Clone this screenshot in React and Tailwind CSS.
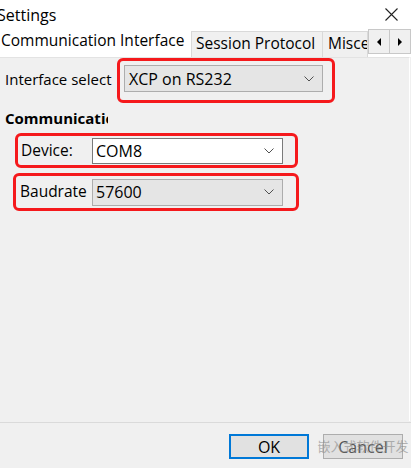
import React from "react";

function Chevron() {
  return (
    <svg width="10" height="6" viewBox="0 0 10 6" className="shrink-0">
      <path d="M0.5 0.5 L5 5 L9.5 0.5" fill="none" stroke="#505050" strokeWidth="1" />
    </svg>
  );
}

function Combo({ value, white, className = "" }) {
  return (
    <div
      className={`flex items-center justify-between border ${
        white ? "bg-white border-[#7a7a7a]" : "bg-[#e5e5e5] border-[#adadad]"
      } pl-[3px] pr-[8px] ${className}`}
    >
      <span className="text-[16px] leading-none text-black">{value}</span>
      <Chevron />
    </div>
  );
}

export default function App() {
  return (
    <div
      className="relative w-[411px] h-[468px] overflow-hidden bg-[#f0f0f0] text-black flex flex-col"
      style={{ fontFamily: '"Open Sans", "Noto Sans CJK SC", sans-serif' }}
    >
      {/* Title bar */}
      <div className="h-[29px] bg-white flex items-center justify-between shrink-0">
        <span className="ml-[-3px] text-[16px] leading-none">Settings</span>
        <svg width="13" height="13" viewBox="0 0 13 13" className="mr-[13px]">
          <path d="M0.5 0.5 L12.5 12.5 M12.5 0.5 L0.5 12.5" stroke="#222" strokeWidth="1.1" />
        </svg>
      </div>

      {/* Tab strip */}
      <div className="h-[28px] bg-white flex items-end shrink-0 relative">
        <div className="h-[28px] w-[191px] bg-white flex items-center pl-[1px] pb-[4px] shrink-0 z-10">
          <span className="text-[15.5px] leading-none whitespace-nowrap">Communication Interface</span>
        </div>
        <div className="h-[26px] w-[132px] bg-[#f0f0f0] border border-b-0 border-[#d9d9d9] flex items-center pl-[4px] pb-[2px] shrink-0">
          <span className="text-[15.5px] leading-none whitespace-nowrap">Session Protocol</span>
        </div>
        <div className="h-[26px] w-[45px] bg-[#f0f0f0] border border-l-0 border-b-0 border-[#d9d9d9] flex items-center pl-[5px] pb-[2px] shrink-0 overflow-hidden">
          <span className="text-[15.5px] leading-none whitespace-nowrap">Miscellaneous</span>
        </div>
        <div className="absolute right-0 top-[0px] h-[25px] w-[43px] flex border border-[#c8c8c8] bg-[#f0f0f0] z-20">
          <div className="flex-1 flex items-center justify-center border-r border-[#c8c8c8]">
            <svg width="4" height="8" viewBox="0 0 4 8"><path d="M4 0 L0 4 L4 8 Z" fill="#000" /></svg>
          </div>
          <div className="flex-1 flex items-center justify-center">
            <svg width="4" height="8" viewBox="0 0 4 8"><path d="M0 0 L4 4 L0 8 Z" fill="#000" /></svg>
          </div>
        </div>
      </div>

      {/* Tab panel */}
      <div className="h-[364px] w-[410px] bg-[#f0f0f0] border-r border-white border-t border-t-[#e3e3e3] shrink-0 flex flex-col">
        {/* Interface select row */}
        <div className="flex items-center">
          <span className="pl-[5px] w-[117px] text-[15px] leading-none whitespace-nowrap overflow-hidden shrink-0 pb-[2px]">
            Interface select
          </span>
          <div className="border-[3px] border-[#f5191c] rounded-[6px] pl-[4px] pt-[4px] pr-[9px] pb-[8px]">
            <Combo value="XCP on RS232" className="w-[199px] h-[27px] pl-[4px]" />
          </div>
        </div>

        {/* Group label */}
        <div className="pl-[5px] mt-[6px] w-[108px] overflow-hidden whitespace-nowrap text-[15px] font-bold leading-[18px]">
          Communication settings
        </div>

        {/* Device row */}
        <div className="ml-[15px] mt-[6px] w-[283px] h-[35px] border-[3px] border-[#f5191c] rounded-[6px] flex items-center pl-[3px]">
          <span className="w-[71px] text-[15.5px] leading-none shrink-0">Device:</span>
          <Combo value="COM8" white className="w-[191px] h-[26px]" />
        </div>

        {/* Baudrate row */}
        <div className="ml-[13px] mt-[5px] w-[286px] h-[38px] border-[3px] border-[#f5191c] rounded-[6px] flex items-center pl-[4px]">
          <span className="w-[72px] text-[15.5px] leading-none shrink-0">Baudrate</span>
          <Combo value="57600" className="w-[191px] h-[27px]" />
        </div>
      </div>

      {/* Separator */}
      <div className="h-[1px] bg-[#dadada] mt-[1px] shrink-0" />

      {/* Buttons */}
      <div className="flex justify-end gap-[14px] pr-[8px] mt-[11px]">
        <button className="w-[80px] h-[25px] bg-[#e1e1e1] border-2 border-[#0078d7] text-[16px] leading-none flex items-center justify-center">
          OK
        </button>
        <button className="relative w-[80px] h-[25px] bg-[#e1e1e1] border border-[#adadad] text-[16px] leading-none flex items-center justify-center">
          <span className="text-[#555]">Cancel</span>
          <span className="absolute inset-0 flex items-center justify-center text-[13px] text-[#888] opacity-60 whitespace-nowrap">
            嵌入式软件开发
          </span>
        </button>
      </div>
    </div>
  );
}
